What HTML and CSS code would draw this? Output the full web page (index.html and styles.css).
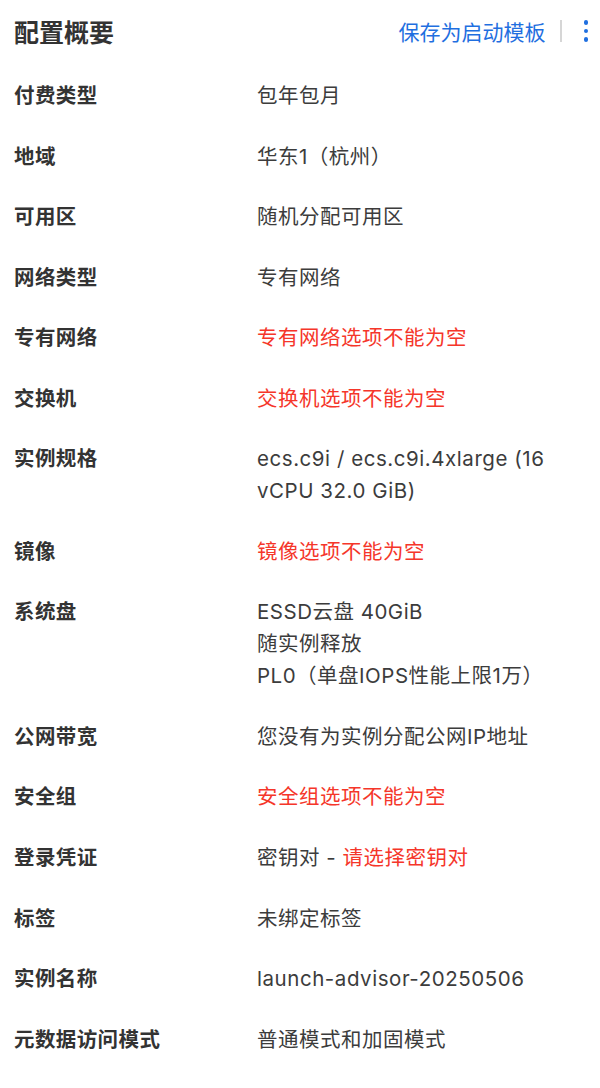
FILE: index.html
```html
<!DOCTYPE html>
<html lang="zh-CN">
<head>
<meta charset="utf-8">
<title>配置概要</title>
<link rel="stylesheet" href="styles.css">
</head>
<body>
<div class="panel">
  <header class="head">
    <h1 class="title">配置概要</h1>
    <div class="actions">
      <a class="link">保存为启动模板</a>
      <span class="sep"></span>
      <span class="more"><i></i><i></i><i></i></span>
    </div>
  </header>
  <dl class="list">
    <div class="row"><dt>付费类型</dt><dd>包年包月</dd></div>
    <div class="row"><dt>地域</dt><dd>华东1（杭州）</dd></div>
    <div class="row"><dt>可用区</dt><dd>随机分配可用区</dd></div>
    <div class="row"><dt>网络类型</dt><dd>专有网络</dd></div>
    <div class="row"><dt>专有网络</dt><dd class="err">专有网络选项不能为空</dd></div>
    <div class="row"><dt>交换机</dt><dd class="err">交换机选项不能为空</dd></div>
    <div class="row"><dt>实例规格</dt><dd class="latin">ecs.c9i / ecs.c9i.4xlarge (16 vCPU 32.0 GiB)</dd></div>
    <div class="row"><dt>镜像</dt><dd class="err">镜像选项不能为空</dd></div>
    <div class="row"><dt>系统盘</dt><dd>ESSD云盘 40GiB<br>随实例释放<br>PL0（单盘IOPS性能上限1万）</dd></div>
    <div class="row"><dt>公网带宽</dt><dd>您没有为实例分配公网IP地址</dd></div>
    <div class="row"><dt>安全组</dt><dd class="err">安全组选项不能为空</dd></div>
    <div class="row"><dt>登录凭证</dt><dd>密钥对 - <span class="err">请选择密钥对</span></dd></div>
    <div class="row"><dt>标签</dt><dd>未绑定标签</dd></div>
    <div class="row"><dt>实例名称</dt><dd class="latin">launch-advisor-20250506</dd></div>
    <div class="row"><dt>元数据访问模式</dt><dd>普通模式和加固模式</dd></div>
  </dl>
</div>
</body>
</html>
```
FILE: styles.css
```css
html, body {
  margin: 0;
  padding: 0;
  background: #ffffff;
}
body {
  font-family: Inter, "Noto Sans CJK SC", sans-serif;
  color: #333333;
}
.panel {
  padding: 0 14px 0 14px;
}
.head {
  display: flex;
  align-items: center;
  justify-content: space-between;
  height: 62px;
  margin-bottom: 16px;
}
.title {
  margin: 0;
  font-size: 25px;
  font-weight: 700;
  color: #333333;
}
.actions {
  display: flex;
  align-items: center;
}
.link {
  font-size: 21px;
  color: #1f6fe0;
}
.sep {
  width: 2px;
  height: 22px;
  background: #d6d6d6;
  margin: 0 0 0 14px;
}
.more {
  display: flex;
  flex-direction: column;
  gap: 4px;
  margin-left: 22px;
  margin-right: -2px;
}
.more i {
  display: block;
  width: 4.5px;
  height: 4.5px;
  border-radius: 50%;
  background: #1f6fe0;
}
.list {
  margin: 0;
  padding-top: 2px;
  display: flex;
  flex-direction: column;
  gap: 28.55px;
}
.row {
  display: grid;
  grid-template-columns: 243px 1fr;
  font-size: 20.5px;
  line-height: 32px;
}
.row dt {
  font-weight: 700;
  color: #333333;
  letter-spacing: 0.4px;
}
.row dd {
  margin: 0;
  color: #3c3c3c;
  letter-spacing: 0.5px;
}
.row dd.latin {
  letter-spacing: 0.55px;
}
.row .err {
  color: #f5362a;
}
```
